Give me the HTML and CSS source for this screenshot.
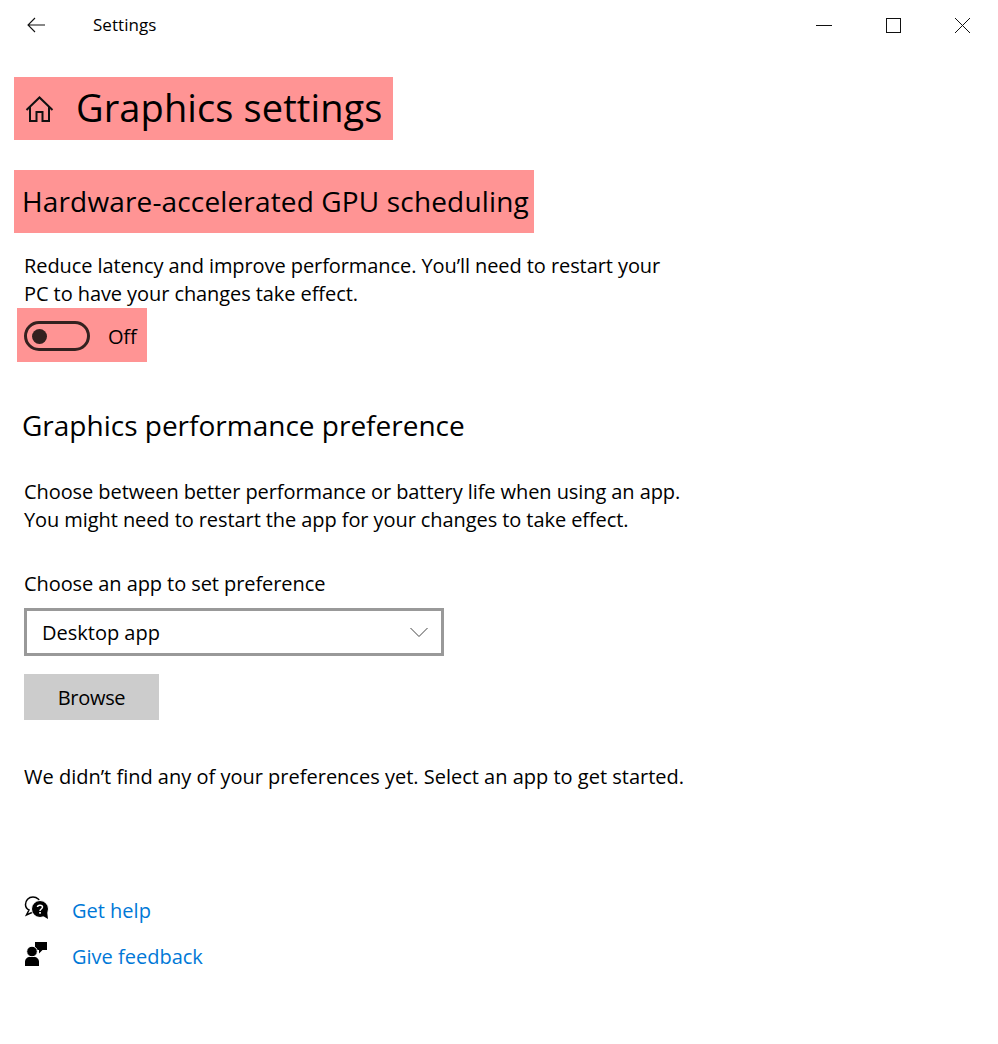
FILE: index.html
```html
<!DOCTYPE html>
<html>
<head>
    <meta charset="UTF-8">
    <title>Settings</title>
    <link rel="stylesheet" href="styles.css">
</head>
<body>
    <div class="titlebar">
        <svg class="back" width="20" height="16" viewBox="0 0 20 16"><path d="M9 1 L2 8 L9 15 M2 8 H19" fill="none" stroke="#111" stroke-width="1.1"/></svg>
        <span class="app_name">Settings</span>
        <div class="win_buttons">
            <svg width="18" height="18" viewBox="0 0 18 18"><path d="M1 9.5 H17" stroke="#111" stroke-width="1"/></svg>
            <svg width="18" height="18" viewBox="0 0 18 18"><rect x="2.5" y="2.5" width="14" height="14" fill="none" stroke="#111" stroke-width="1"/></svg>
            <svg width="18" height="18" viewBox="0 0 18 18"><path d="M2 2 L17 17 M17 2 L2 17" stroke="#111" stroke-width="1"/></svg>
        </div>
    </div>

    <div class="content">
        <div class="mark page_head">
            <svg width="30" height="28" viewBox="0 0 30 28"><path d="M2.500 15 L15.500 2.500 L28.500 15 M6 12 V26 H12.500 V17 H18.500 V26 H25 V12" fill="none" stroke="#111" stroke-width="2"/></svg>
            <h1>Graphics settings</h1>
        </div>

        <div class="mark sub_head">
            <h2>Hardware-accelerated GPU scheduling</h2>
        </div>

        <p class="text first">Reduce latency and improve performance. You’ll need to restart your<br>PC to have your changes take effect.</p>

        <div class="mark toggle_row">
            <span class="toggle"><span class="knob"></span></span>
            <span class="toggle_label">Off</span>
        </div>

        <h2 class="plain_head">Graphics performance preference</h2>

        <p class="text">Choose between better performance or battery life when using an app.<br>You might need to restart the app for your changes to take effect.</p>

        <p class="text choose">Choose an app to set preference</p>

        <div class="select">
            <span>Desktop app</span>
            <svg width="18" height="11" viewBox="0 0 18 11"><path d="M0.500 1 L9 9.500 L17.500 1" fill="none" stroke="#444" stroke-width="1"/></svg>
        </div>

        <div class="button">Browse</div>

        <p class="text none_yet">We didn’t find any of your preferences yet. Select an app to get started.</p>

        <div class="links">
            <a href="javascript:;" class="link_row">
                <svg class="link_icon" width="26" height="26" viewBox="0 0 26 26">
                    <path d="M5 15 L2.500 20 L9 17 C13 17.500 16.500 14 16.500 9.500 C16.500 5 13 2 9 2 C4.500 2 1.500 5.500 1.500 9.500 C1.500 11.500 3 14 5 15 Z" fill="none" stroke="#000" stroke-width="1.500"/>
                    <circle cx="16" cy="14" r="8.500" fill="#000" stroke="#fff" stroke-width="1"/>
                    <path d="M19 21 L24 24 L23 16 Z" fill="#000"/>
                    <path d="M13.500 12 C13.500 9.500 18.500 9.500 18.500 12 C18.500 14 16 14 16 16" fill="none" stroke="#fff" stroke-width="1.500"/>
                    <rect x="15.200" y="17" width="1.700" height="1.700" fill="#fff"/>
                </svg>
                <span>Get help</span>
            </a>
            <a href="javascript:;" class="link_row">
                <svg class="link_icon" width="26" height="26" viewBox="0 0 26 26">
                    <path d="M11 1 H23 V9 H18.500 L15 12.500 V9 H11 Z" fill="#000"/>
                    <circle cx="8" cy="10.500" r="5.300" fill="#000" stroke="#fff" stroke-width="1"/>
                    <path d="M1 25 V21 C1 18 3 16 6 16 H10 C13 16 15 18 15 21 V25 Z" fill="#000"/>
                </svg>
                <span>Give feedback</span>
            </a>
        </div>
    </div>
</body>
</html>
```

FILE: styles.css
```css
* {
    margin: 0;
    padding: 0;
    box-sizing: border-box;
}
body {
    background: #fff;
    color: #000;
    font-family: "Open Sans", "Noto Sans", sans-serif;
    font-size: 20px;
}
a {
    text-decoration: none;
}
.titlebar {
    display: flex;
    align-items: center;
    height: 50px;
    padding-left: 26px;
}
.back {
    display: block;
}
.app_name {
    margin-left: 47px;
    padding-bottom: 2px;
    font-size: 17px;
    letter-spacing: 0.05px;
}
.win_buttons {
    display: flex;
    gap: 51px;
    margin-left: auto;
    margin-right: 27px;
}
.content {
    padding: 27px 0 0 14px;
}
.mark {
    background: #ff9494;
    width: fit-content;
}
.page_head {
    display: flex;
    align-items: center;
    height: 63px;
    padding: 0 11px 0 10px;
}
h1 {
    margin-left: 22px;
    padding-bottom: 4px;
    font-size: 38px;
    font-weight: 400;
    letter-spacing: 0.1px;
}
.sub_head {
    display: flex;
    align-items: center;
    height: 63px;
    margin-top: 30px;
    padding: 0 5px 2px 8px;
}
h2 {
    font-size: 28px;
    font-weight: 400;
    letter-spacing: 0.15px;
}
.text {
    margin-left: 10px;
    line-height: 28px;
    letter-spacing: -0.08px;
}
.first {
    margin-top: 19px;
}
.toggle_row {
    display: flex;
    align-items: center;
    height: 54px;
    margin-left: 3px;
    padding: 2px 11px 0 7px;
}
.toggle {
    display: flex;
    align-items: center;
    width: 66px;
    height: 30px;
    padding-left: 5px;
    border: 3px solid #33211f;
    border-radius: 15px;
}
.knob {
    width: 15px;
    height: 15px;
    border-radius: 50%;
    background: #33211f;
}
.toggle_label {
    margin-left: 18px;
    letter-spacing: -0.2px;
}
.plain_head {
    margin: 44px 0 0 8px;
    letter-spacing: 0;
}
.plain_head + .text {
    margin-top: 34px;
}
.choose {
    margin-top: 36px;
}
.select {
    display: flex;
    align-items: center;
    justify-content: space-between;
    width: 420px;
    height: 48px;
    margin: 10px 0 0 10px;
    padding: 0 13px 0 15px;
    border: 3px solid #999;
}
.button {
    display: flex;
    align-items: center;
    justify-content: center;
    width: 135px;
    height: 46px;
    margin: 18px 0 0 10px;
    background: #ccc;
    letter-spacing: -0.3px;
}
.none_yet {
    margin-top: 43px;
    letter-spacing: 0;
}
.links {
    display: flex;
    flex-direction: column;
    gap: 20px;
    margin: 106px 0 0 10px;
}
.link_row {
    display: flex;
    align-items: center;
    gap: 22px;
    height: 26px;
    color: #0078d7;
}
.link_icon {
    margin-bottom: 4px;
}
```
